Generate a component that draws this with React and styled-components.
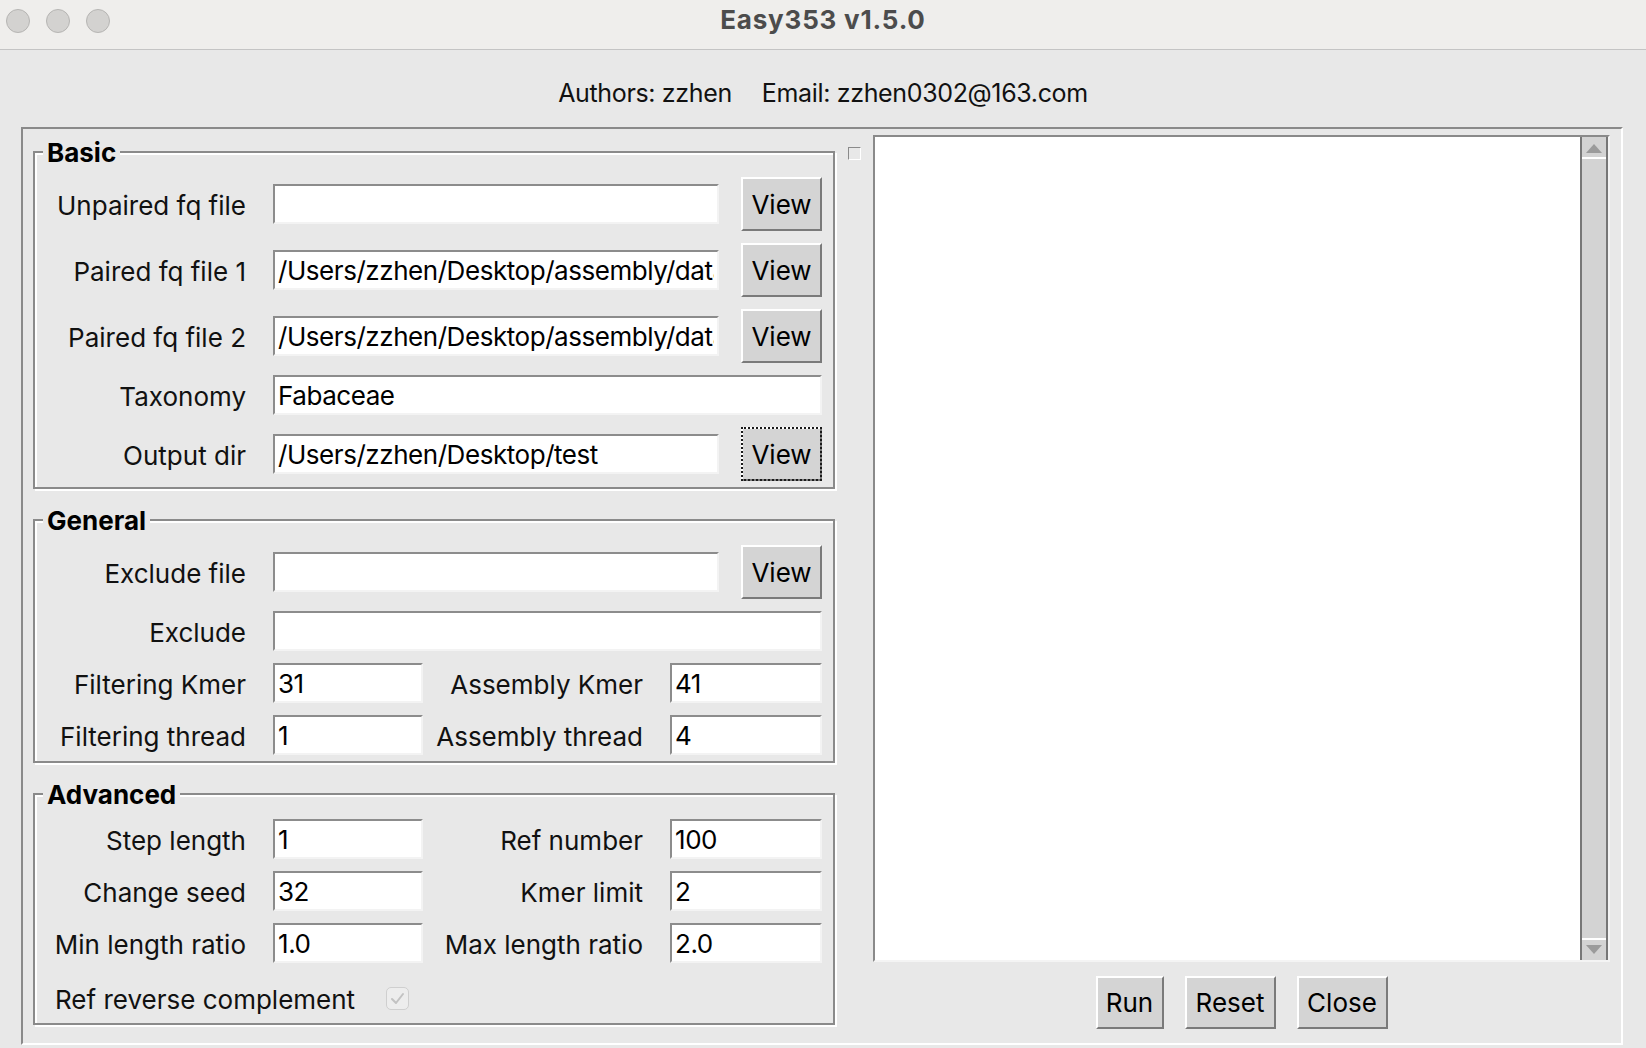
import React from 'react'
import styled, { createGlobalStyle } from 'styled-components'

const GlobalStyle = createGlobalStyle`
  html, body {
    margin: 0;
    padding: 0;
    background: #e8e8e8;
  }
  body {
    font-family: Inter, "Liberation Sans", sans-serif;
    color: #111;
  }
  #root {
    width: 1646px;
    height: 1048px;
    overflow: hidden;
  }
`

const Window = styled.div`
  width: 1646px;
  height: 1048px;
  background: #e8e8e8;
`

const TitleBar = styled.div`
  height: 49px;
  display: grid;
  grid-template-columns: 1fr auto 1fr;
  align-items: start;
  background: #efeeec;
  border-bottom: 1px solid #c4c4c4;
`

const Lights = styled.div`
  display: flex;
  gap: 16px;
  padding: 9px 0 0 6px;
`

const Light = styled.span`
  width: 24px;
  height: 24px;
  box-sizing: border-box;
  border-radius: 50%;
  border: 1px solid #b6b5b3;
  background: #d3d2d0;
`

const Title = styled.div`
  font-weight: 700;
  font-size: 26px;
  letter-spacing: 0.8px;
  line-height: 40px;
  color: #4c4c4c;
`

const Credits = styled.div`
  height: 77px;
  box-sizing: border-box;
  padding-top: 28px;
  display: flex;
  justify-content: center;
  gap: 30px;
  font-size: 25px;
  letter-spacing: -0.35px;
  line-height: 30px;
  color: #111;
`

const Outer = styled.div`
  margin-left: 21px;
  width: 1602px;
  box-sizing: border-box;
  display: flex;
  align-items: flex-start;
  padding: 0 11px 14px 10px;
  border: 2px solid;
  border-color: #8a8a8a #fff #fff #8a8a8a;
`

const LeftCol = styled.div`
  width: 802px;
  flex-shrink: 0;
  padding-top: 22px;
  display: flex;
  flex-direction: column;
  gap: 30px;
`

const Group = styled.section`
  position: relative;
  display: flex;
  flex-direction: column;
  padding: 18px 11px 0 0;
  border: 2px solid #8a8a8a;
  box-shadow: inset 2px 2px 0 #fff, 2px 2px 0 #fff;
`

const Legend = styled.span`
  position: absolute;
  top: -14px;
  left: 8px;
  padding: 0 4px;
  background: #e8e8e8;
  font-weight: 700;
  font-size: 26px;
  line-height: 28px;
  color: #000;
`

const Row = styled.div`
  display: grid;
  grid-template-columns: ${(p) => p.$cols};
  align-items: center;
  padding: 6px 0;
`

const CheckRow = styled(Row)`
  padding: 12px 0 8px;
`

const Label = styled.div`
  text-align: right;
  padding: 4px 27px 0 0;
  font-size: 26px;
  line-height: 30px;
  white-space: nowrap;
  color: #111;
`

const CheckLabel = styled(Label)`
  text-align: left;
  padding: 4px 0 0 20px;
`

const Entry = styled.input`
  box-sizing: border-box;
  width: 100%;
  min-width: 0;
  height: 40px;
  margin: 0;
  padding: 0 3px;
  grid-column: span ${(p) => p.$span || 1};
  border: 2px solid;
  border-color: #8c8c8c #f3f3f3 #f3f3f3 #8c8c8c;
  border-radius: 0;
  background: #fff;
  font-family: inherit;
  font-size: 26px;
  letter-spacing: -0.45px;
  color: #000;
  outline: none;
`

const Button = styled.button`
  box-sizing: border-box;
  width: ${(p) => p.$w}px;
  height: ${(p) => p.$h || 54}px;
  margin: 0;
  padding: 0;
  justify-self: end;
  border: 2px solid;
  border-color: #fff #7a7a7a #7a7a7a #fff;
  border-radius: 0;
  background: #d4d4d4;
  font-family: inherit;
  font-size: 26px;
  color: #000;
  outline: ${(p) => (p.$focus ? '2px dotted #1a1a1a' : 'none')};
  outline-offset: -2px;
`

const Check = styled.span`
  width: 23px;
  height: 23px;
  box-sizing: border-box;
  display: flex;
  align-items: center;
  justify-content: center;
  border: 1.5px solid #cfcfcf;
  border-radius: 5px;
  background: #ededed;
`

const Handle = styled.span`
  width: 13px;
  height: 13px;
  flex-shrink: 0;
  box-sizing: border-box;
  margin: 18px 12px 0 13px;
  border: 1.5px solid;
  border-color: #8a8a8a #fff #fff #8a8a8a;
`

const RightCol = styled.div`
  width: 737px;
  flex-shrink: 0;
  margin-top: 6px;
  display: flex;
  flex-direction: column;
`

const TextFrame = styled.div`
  height: 827px;
  box-sizing: border-box;
  display: flex;
  border: 2px solid;
  border-color: #8a8a8a #f4f4f4 #f4f4f4 #8a8a8a;
`

const TextArea = styled.div`
  flex: 1;
  background: #fff;
`

const Scroll = styled.div`
  width: 28px;
  box-sizing: border-box;
  display: flex;
  flex-direction: column;
  padding: 2px 0;
  background: #d3d3d3;
  border-left: 2px solid #777;
  border-right: 2px solid #777;
`

const Arrow = styled.div`
  height: 18px;
  display: flex;
  align-items: center;
  justify-content: center;
  border-${(p) => (p.$down ? 'top' : 'bottom')}: 2px solid #fff;
`

const Track = styled.div`
  flex: 1;
`

const Actions = styled.div`
  display: flex;
  justify-content: center;
  gap: 21px;
  margin-top: 14px;
`

const FILE_COLS = '238px 446px 103px'
const WIDE_COLS = '238px 549px'
const PAIR_COLS = '238px 150px 247px 152px'
const DATA_DIR = '/Users/zzhen/Desktop/assembly/data'

function FileRow({ label, value, focus }) {
  return (
    <Row $cols={FILE_COLS}>
      <Label>{label}</Label>
      <Entry readOnly defaultValue={value} />
      <Button $w={81} $focus={focus}>View</Button>
    </Row>
  )
}

function PairRow({ a, av, b, bv }) {
  return (
    <Row $cols={PAIR_COLS}>
      <Label>{a}</Label>
      <Entry readOnly defaultValue={av} />
      <Label>{b}</Label>
      <Entry readOnly defaultValue={bv} />
    </Row>
  )
}

export default function App() {
  return (
    <Window>
      <GlobalStyle />
      <TitleBar>
        <Lights>
          <Light />
          <Light />
          <Light />
        </Lights>
        <Title>Easy353 v1.5.0</Title>
        <div />
      </TitleBar>

      <Credits>
        <span>Authors: zzhen</span>
        <span>Email: zzhen0302@163.com</span>
      </Credits>

      <Outer>
        <LeftCol>
          <Group>
            <Legend>Basic</Legend>
            <FileRow label="Unpaired fq file" value="" />
            <FileRow label="Paired fq file 1" value={`${DATA_DIR}/sample_1.fq`} />
            <FileRow label="Paired fq file 2" value={`${DATA_DIR}/sample_2.fq`} />
            <Row $cols={WIDE_COLS}>
              <Label>Taxonomy</Label>
              <Entry readOnly defaultValue="Fabaceae" />
            </Row>
            <FileRow label="Output dir" value="/Users/zzhen/Desktop/test" focus />
          </Group>

          <Group>
            <Legend>General</Legend>
            <FileRow label="Exclude file" value="" />
            <Row $cols={WIDE_COLS}>
              <Label>Exclude</Label>
              <Entry readOnly defaultValue="" />
            </Row>
            <PairRow a="Filtering Kmer" av="31" b="Assembly Kmer" bv="41" />
            <PairRow a="Filtering thread" av="1" b="Assembly thread" bv="4" />
          </Group>

          <Group>
            <Legend>Advanced</Legend>
            <PairRow a="Step length" av="1" b="Ref number" bv="100" />
            <PairRow a="Change seed" av="32" b="Kmer limit" bv="2" />
            <PairRow a="Min length ratio" av="1.0" b="Max length ratio" bv="2.0" />
            <CheckRow $cols="351px 23px">
              <CheckLabel>Ref reverse complement</CheckLabel>
              <Check>
                <svg width="15" height="13" viewBox="0 0 15 13">
                  <path d="M2 7 L6 11 L13 2" fill="none" stroke="#c2c2c2" strokeWidth="2" strokeLinecap="round" strokeLinejoin="round" />
                </svg>
              </Check>
            </CheckRow>
          </Group>
        </LeftCol>

        <Handle />

        <RightCol>
          <TextFrame>
            <TextArea />
            <Scroll>
              <Arrow>
                <svg width="16" height="9" viewBox="0 0 16 9">
                  <path d="M8 0 L16 9 L0 9 Z" fill="#9b9b9b" />
                </svg>
              </Arrow>
              <Track />
              <Arrow $down>
                <svg width="16" height="9" viewBox="0 0 16 9">
                  <path d="M0 0 L16 0 L8 9 Z" fill="#9b9b9b" />
                </svg>
              </Arrow>
            </Scroll>
          </TextFrame>
          <Actions>
            <Button $w={68} $h={53}>Run</Button>
            <Button $w={91} $h={53}>Reset</Button>
            <Button $w={91} $h={53}>Close</Button>
          </Actions>
        </RightCol>
      </Outer>
    </Window>
  )
}
